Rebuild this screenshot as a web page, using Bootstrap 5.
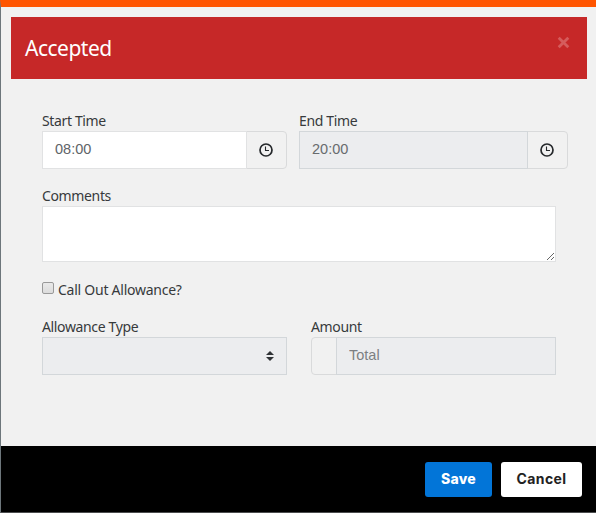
<!DOCTYPE html>
<html lang="en">
<head>
<meta charset="utf-8">
<meta name="viewport" content="width=device-width, initial-scale=1">
<title>Accepted</title>
<link href="https://cdn.jsdelivr.net/npm/bootstrap@5.3.0/dist/css/bootstrap.min.css" rel="stylesheet">
<style>
body{font-family:"Noto Sans","Open Sans",sans-serif;font-size:14px;color:#373a3c;background:#f1f1f1}
.shift-dialog{height:513px;border-left:1px solid #6d767b;border-top:7px solid #ff5500;border-bottom:1px solid #4b4d4e;background:#f1f1f1}
.shift-head{height:62px;margin:10px 9px 0 10px;padding:0 17px 0 14px;background:#c62828;color:#fff}
.shift-title{font-size:21px;line-height:30px;letter-spacing:-.5px;font-weight:400;padding-bottom:1px}
.shift-close{border:0;background:none;padding:0;margin-top:-11px;line-height:0}
.shift-body{padding:32px 28px 0 41px}
.field-label{display:block;height:20px;line-height:20px;letter-spacing:-.36px;white-space:nowrap}
.check-label{letter-spacing:-.25px}
.time-row{height:58px;margin-bottom:17px}
.start-field,.type-field{width:245px}
.end-field{width:269px}
.comment-field{width:514px}
.form-control,.form-select{height:38px;border:1px solid #e1e2e3;border-radius:0;font:14.5px/20px "Liberation Sans",Arial,sans-serif;color:#606468;padding:7px 12px 10px;min-height:0}
.form-control:disabled,.form-select:disabled{background-color:#ecedef;border-color:#d3d7da;color:#686b6e;opacity:1}
.form-control::placeholder{color:#7c7f82;opacity:1}
.form-select{background-image:none}
textarea.form-control{height:56px;display:block}
.input-group-text{background:#f1f1f1;border-color:#d9dadb;border-radius:4px;padding:0;justify-content:center}
.clock-box{width:41px;padding-right:2px}
.currency-box{width:26px}
.select-arrows{position:absolute;right:13px;top:13px}
.check-row{height:20px;margin:18px 0 17px}
.allow-check{appearance:none;width:12px;height:12px;margin:2px 0 0;border:1px solid #999;border-radius:2px;background:linear-gradient(#e9e9e9,#dcdcdc)}
.shift-foot{height:66px;padding:0 14px 0 0;gap:9px;background:#000}
.foot-btn{height:35px;border:0;border-radius:3px;padding:0;font:800 14px/34px Inter,"Open Sans",sans-serif}
.save-btn,.save-btn:hover{width:67px;background:#0275d8;color:#fff;letter-spacing:.2px}
.cancel-btn,.cancel-btn:hover{width:81px;background:#fff;color:#222;font-weight:700;letter-spacing:.4px}
</style>
<script src="https://cdn.jsdelivr.net/npm/bootstrap@5.3.0/dist/js/bootstrap.bundle.min.js"></script>
</head>
<body>
<main class="shift-dialog d-flex flex-column">
  <header class="shift-head d-flex align-items-center justify-content-between">
    <h1 class="shift-title m-0">Accepted</h1>
    <button class="shift-close" type="button" aria-label="Close"><svg width="13" height="13" viewBox="0 0 13 13"><path d="M1.7 1.7l9.6 9.6M11.3 1.7l-9.6 9.6" stroke="#d55c5c" stroke-width="2.8"/></svg></button>
  </header>
  <form class="shift-body flex-grow-1">
    <div class="d-flex time-row">
      <div class="start-field me-auto">
        <label class="field-label" for="start">Start Time</label>
        <div class="input-group flex-nowrap">
          <input class="form-control" id="start" value="08:00">
          <span class="input-group-text clock-box"><svg width="14" height="14" viewBox="0 0 14 14" fill="none" stroke="#25282b"><circle cx="7" cy="7" r="6" stroke-width="1.7"/><path d="M6.5 3.5v4H10" stroke-width="1.1"/></svg></span>
        </div>
      </div>
      <div class="end-field">
        <label class="field-label" for="end">End Time</label>
        <div class="input-group flex-nowrap">
          <input class="form-control" id="end" value="20:00" disabled>
          <span class="input-group-text clock-box"><svg width="14" height="14" viewBox="0 0 14 14" fill="none" stroke="#25282b"><circle cx="7" cy="7" r="6" stroke-width="1.7"/><path d="M6.5 3.5v4H10" stroke-width="1.1"/></svg></span>
        </div>
      </div>
    </div>
    <div class="comment-field">
      <label class="field-label" for="comments">Comments</label>
      <textarea class="form-control" id="comments"></textarea>
    </div>
    <div class="d-flex align-items-start check-row">
      <input class="allow-check" type="checkbox" id="callout">
      <label class="field-label check-label ms-1" for="callout">Call Out Allowance?</label>
    </div>
    <div class="d-flex comment-field justify-content-between">
      <div class="type-field">
        <label class="field-label" for="type">Allowance Type</label>
        <div class="position-relative">
          <select class="form-select" id="type" disabled><option></option></select>
          <svg class="select-arrows" width="8" height="12" viewBox="0 0 8 12" fill="#303336"><path d="M0 5l4-4 4 4zM0 7h8l-4 4z"/></svg>
        </div>
      </div>
      <div class="type-field">
        <label class="field-label" for="amount">Amount</label>
        <div class="input-group flex-nowrap">
          <span class="input-group-text currency-box"></span>
          <input class="form-control" id="amount" placeholder="Total" disabled>
        </div>
      </div>
    </div>
  </form>
  <footer class="shift-foot d-flex align-items-center justify-content-end">
    <button class="btn foot-btn save-btn" type="button">Save</button>
    <button class="btn foot-btn cancel-btn" type="button">Cancel</button>
  </footer>
</main>
</body>
</html>
